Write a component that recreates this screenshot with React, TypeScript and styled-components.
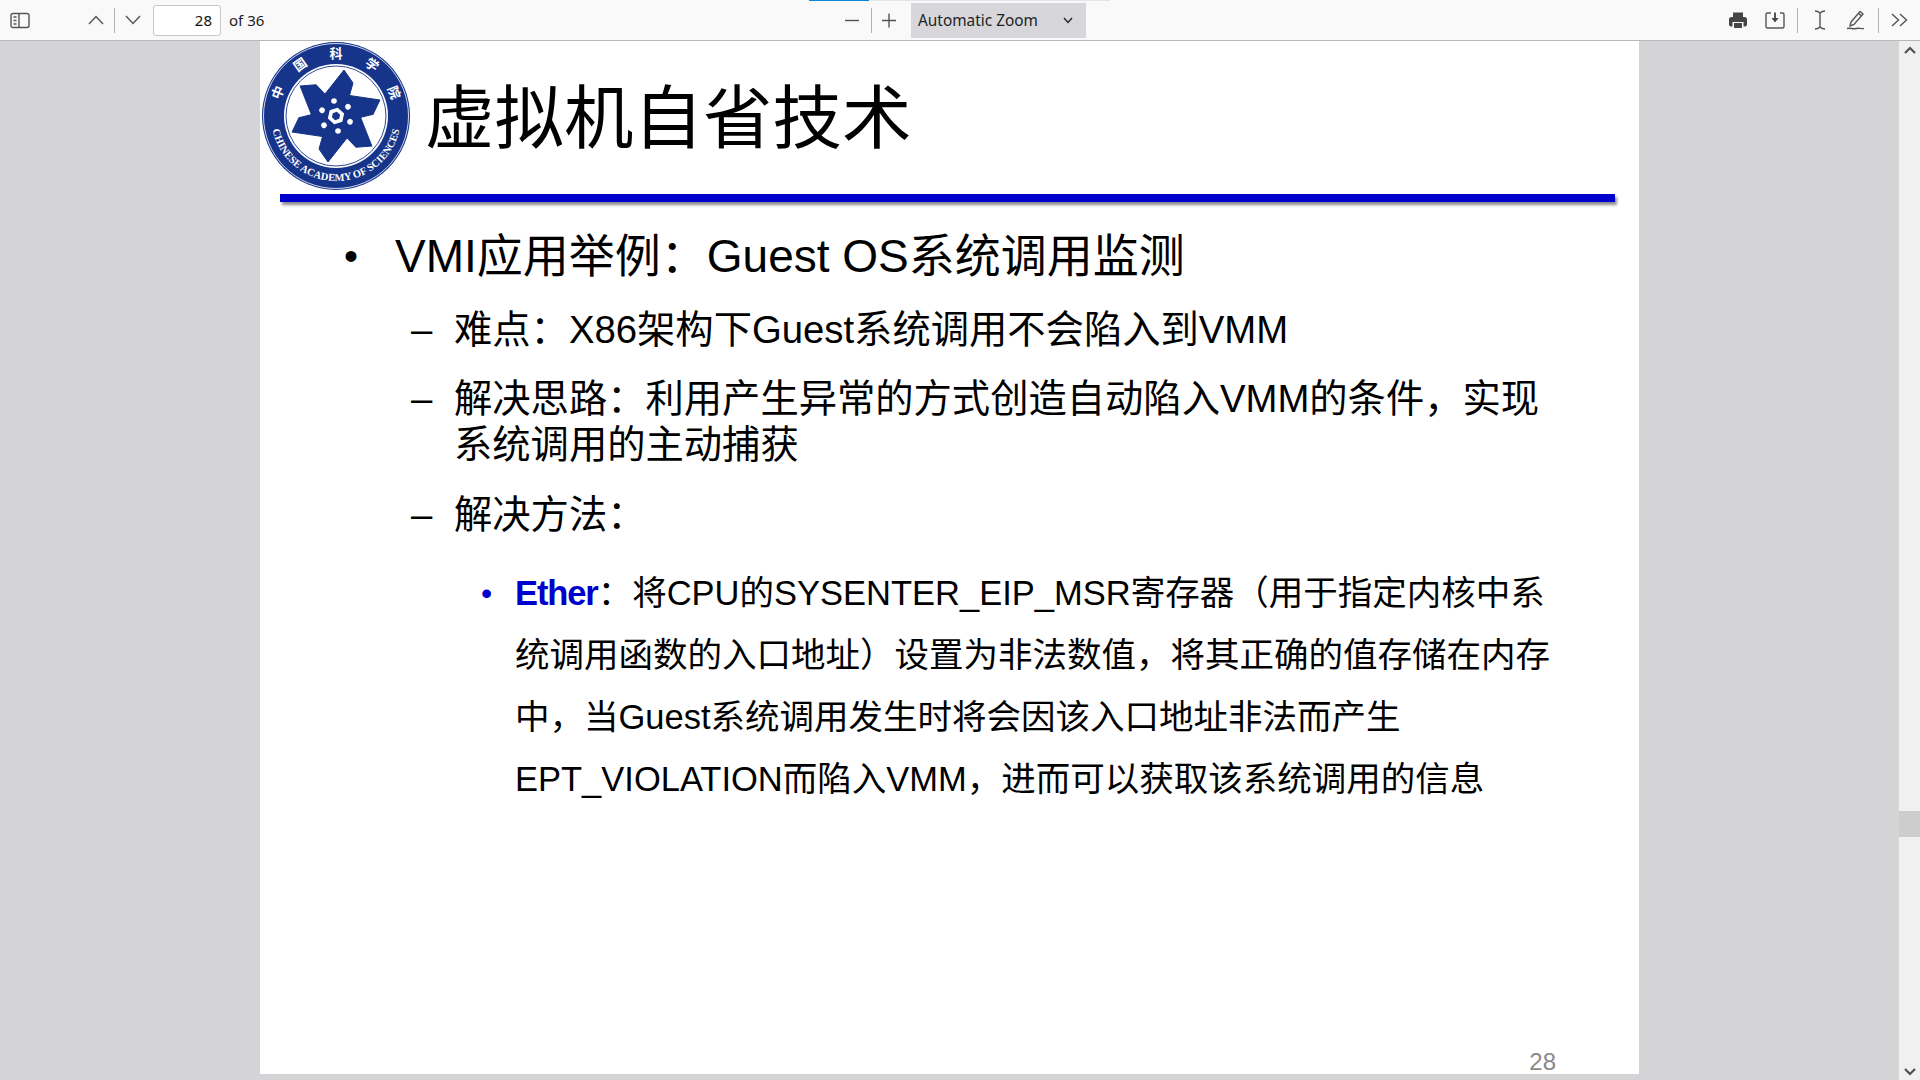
import React from 'react';
import styled, { createGlobalStyle } from 'styled-components';

const GlobalStyle = createGlobalStyle`
  html, body {
    margin: 0;
    padding: 0;
    height: 100%;
    overflow: hidden;
  }
  #root {
    height: 100%;
  }
`;

const CJK = `"Liberation Sans", "Noto Sans CJK SC", sans-serif`;

const PETAL = 'M-11 -22 L8 -46 L17 -33 L13 -19 Z';
const ANGLES = [0, 60, 120, 180, 240, 300];
const HEX_OUTER = '0,-8.500 7.400,-4.250 7.400,4.250 0,8.500 -7.400,4.250 -7.400,-4.250';
const HEX_INNER = '0,-4.300 3.700,-2.150 3.700,2.150 0,4.300 -3.700,2.150 -3.700,-2.150';
const SEAL = [
  { ch: '中', a: -68 },
  { ch: '国', a: -35 },
  { ch: '科', a: 0 },
  { ch: '学', a: 35 },
  { ch: '院', a: 68 },
];

const Logo = () => (
  <svg width="150" height="150" viewBox="0 0 150 150">
    <defs>
      <path id="bottomArc" d="M9 75 A 65 65 0 0 0 139 75" fill="none" />
    </defs>
    <circle cx="74" cy="75" r="74" fill="#16348a" />
    <circle cx="74" cy="75" r="72.500" fill="none" stroke="#fff" strokeWidth="0.800" />
    <circle cx="74" cy="75" r="52" fill="#fff" />
    <circle cx="74" cy="75" r="50" fill="none" stroke="#16348a" strokeWidth="0.900" />
    <g transform="translate(74 75)">
      {ANGLES.map((a) => (
        <path key={a} d={PETAL} fill="#16348a" stroke="#16348a" strokeLinejoin="round" transform={`rotate(${a})`} />
      ))}
      <circle r="24" fill="#16348a" />
      {ANGLES.map((a) => (
        <circle key={a} cx="-2" cy="-15" r="2.800" fill="#fff" transform={`rotate(${a})`} />
      ))}
      <polygon points={HEX_OUTER} fill="#fff" transform="rotate(12)" />
      <polygon points={HEX_INNER} fill="#16348a" transform="rotate(12)" />
    </g>
    <text fontFamily='"Liberation Serif", serif' fontSize="10.500" fontWeight="700" fill="#fff">
      <textPath href="#bottomArc" startOffset="50%" textAnchor="middle">CHINESE ACADEMY OF SCIENCES</textPath>
    </text>
    {SEAL.map((s) => (
      <text
        key={s.ch}
        x="74"
        y="17"
        textAnchor="middle"
        fontFamily='"Noto Sans CJK SC", serif'
        fontSize="13"
        fontWeight="700"
        fill="#fff"
        transform={`rotate(${s.a} 74 75)`}
      >
        {s.ch}
      </text>
    ))}
  </svg>
);

const icon = { fill: 'none', stroke: '#555', strokeWidth: 1.4 };

const App = () => (
  <Shell>
    <GlobalStyle />
    <Toolbar>
      <LoadBar>
        <LoadFill />
      </LoadBar>
      <SidebarToggle>
        <svg width="20" height="17" viewBox="0 0 20 17" {...icon}>
          <rect x="1" y="1.500" width="18" height="14" rx="2" />
          <path d="M9 1.500V15.500M3.500 5H6.500M3.500 8.500H6.500M3.500 12H6.500" />
        </svg>
      </SidebarToggle>
      <IconButton $width={36}>
        <svg width="16" height="10" viewBox="0 0 16 10" {...icon}><path d="M1 9L8 1.500L15 9" /></svg>
      </IconButton>
      <Divider />
      <IconButton $width={35}>
        <svg width="16" height="10" viewBox="0 0 16 10" {...icon}><path d="M1 1L8 8.500L15 1" /></svg>
      </IconButton>
      <PageInput>28</PageInput>
      <PageCount>of 36</PageCount>
      <ZoomGroup>
        <IconButton $width={38}>
          <svg width="16" height="16" viewBox="0 0 16 16" {...icon}><path d="M1 8.500H15" /></svg>
        </IconButton>
        <Divider />
        <IconButton $width={34}>
          <svg width="16" height="16" viewBox="0 0 16 16" {...icon}><path d="M1 8.500H15M8 1.500V15.500" /></svg>
        </IconButton>
        <ZoomSelect>
          Automatic Zoom
          <svg width="10" height="7" viewBox="0 0 10 7" fill="none" stroke="#222" strokeWidth="1.300"><path d="M1 1L5 5.500L9 1" /></svg>
        </ZoomSelect>
      </ZoomGroup>
      <RightTools>
        <IconButton $width={36}>
          <svg width="18" height="18" viewBox="0 0 18 18">
            <path fill="#444" d="M4 1.500h10v4.500H4zM2.500 6h13A2.500 2.500 0 0 1 18 8.500v5a2 2 0 0 1-2 2h-1.500V11h-11v4.500H2a2 2 0 0 1-2-2v-5A2.500 2.500 0 0 1 2.500 6zM5 12h8v5H5z" />
          </svg>
        </IconButton>
        <IconButton $width={41} $padRight={3}>
          <svg width="20" height="18" viewBox="0 0 20 18" {...icon}>
            <path d="M6 2H2.500A1.500 1.500 0 0 0 1 3.500V15.500A1.500 1.500 0 0 0 2.500 17H17.500A1.500 1.500 0 0 0 19 15.500V3.500A1.500 1.500 0 0 0 17.500 2H15" />
            <path d="M10 1.500V8" strokeWidth="2" />
            <path fill="#444" stroke="none" d="M6.500 7H13.500L10 11.500Z" />
          </svg>
        </IconButton>
        <Divider />
        <IconButton $width={44}>
          <svg width="12" height="20" viewBox="0 0 12 20" {...icon}><path d="M1 1C4 1 5 2 6 3C7 2 8 1 11 1M6 3V17M1 19C4 19 5 18 6 17C7 18 8 19 11 19" /></svg>
        </IconButton>
        <IconButton $width={36} $padRight={10}>
          <svg width="19" height="20" viewBox="0 0 19 20" {...icon}>
            <path d="M5 12L14 1.500L17 4L8 14.500L4 16Z M12.500 3.500L15.500 6" />
            <path d="M1 18.500C5 17.500 7 19.500 10 18.500C13 17.500 15 19 18 18.500" />
          </svg>
        </IconButton>
        <Divider />
        <IconButton $width={41}>
          <svg width="17" height="14" viewBox="0 0 17 14" {...icon}><path d="M1 1L7.500 7L1 13M9 1L15.500 7L9 13" /></svg>
        </IconButton>
      </RightTools>
    </Toolbar>
    <Viewer>
      <PageArea>
        <Slide>
          <SlideHeader>
            <Logo />
            <SlideTitle>虚拟机自省技术</SlideTitle>
          </SlideHeader>
          <TitleRule />
          <Level1>
            <Dot>•</Dot>
            <span>VMI应用举例&#xFF1A;Guest OS系统调用监测</span>
          </Level1>
          <Level2>
            <Dash>–</Dash>
            <span>难点&#xFF1A;X86架构下Guest系统调用不会陷入到VMM</span>
          </Level2>
          <Level2>
            <Dash>–</Dash>
            <span>
              解决思路&#xFF1A;利用产生异常的方式创造自动陷入VMM的条件&#xFF0C;实现
              <br />
              系统调用的主动捕获
            </span>
          </Level2>
          <Level2>
            <Dash>–</Dash>
            <span>解决方法&#xFF1A;</span>
          </Level2>
          <Level3>
            <BlueDot>•</BlueDot>
            <span>
              <Keyword>Ether</Keyword>&#xFF1A;将CPU的SYSENTER_EIP_MSR寄存器&#xFF08;用于指定内核中系
              <br />
              统调用函数的入口地址&#xFF09;设置为非法数值&#xFF0C;将其正确的值存储在内存
              <br />
              中&#xFF0C;当Guest系统调用发生时将会因该入口地址非法而产生
              <br />
              EPT_VIOLATION而陷入VMM&#xFF0C;进而可以获取该系统调用的信息
            </span>
          </Level3>
          <PageNumber>28</PageNumber>
        </Slide>
      </PageArea>
      <ScrollBar>
        <ScrollArrow>
          <svg width="12" height="8" viewBox="0 0 12 8" fill="none" stroke="#505050" strokeWidth="2.200"><path d="M1 7L6 2L11 7" /></svg>
        </ScrollArrow>
        <ScrollTrack>
          <ScrollThumb />
        </ScrollTrack>
        <ScrollArrow>
          <svg width="12" height="8" viewBox="0 0 12 8" fill="none" stroke="#505050" strokeWidth="2.200"><path d="M1 1L6 6L11 1" /></svg>
        </ScrollArrow>
      </ScrollBar>
    </Viewer>
  </Shell>
);

export default App;

const Shell = styled.div`
  display: flex;
  flex-direction: column;
  width: 1920px;
  height: 1080px;
  overflow: hidden;
  background: #d4d4d7;
  font-family: "Noto Sans", sans-serif;
`;

const Toolbar = styled.div`
  position: relative;
  display: flex;
  align-items: center;
  flex: 0 0 40px;
  padding-left: 10px;
  background: #f9f9fa;
  border-bottom: 1px solid #b8b8b8;
`;

const LoadBar = styled.div`
  position: absolute;
  top: 0;
  left: 809px;
  width: 301px;
  height: 1px;
  background: #e4e4e4;
`;

const LoadFill = styled.div`
  width: 60px;
  height: 1px;
  background: #0a84d6;
`;

const SidebarToggle = styled.div`
  display: flex;
  align-items: center;
  flex: 0 0 68px;
`;

const IconButton = styled.div<{ $width: number; $padRight?: number }>`
  display: flex;
  align-items: center;
  justify-content: center;
  box-sizing: border-box;
  flex: 0 0 ${(p) => p.$width}px;
  height: 30px;
  padding-right: ${(p) => p.$padRight ?? 0}px;
`;

const Divider = styled.div`
  flex: 0 0 1px;
  height: 25px;
  background: #b1b1b1;
`;

const PageInput = styled.div`
  box-sizing: border-box;
  flex: 0 0 68px;
  height: 31px;
  margin-left: 3px;
  padding-right: 8px;
  background: #fff;
  border: 1px solid #c8c8c8;
  border-radius: 3px;
  text-align: right;
  font-size: 15px;
  line-height: 28px;
  color: #111;
`;

const PageCount = styled.div`
  flex: 0 0 60px;
  margin-left: 8px;
  font-size: 15px;
  color: #222;
`;

const ZoomGroup = styled.div`
  display: flex;
  align-items: center;
  margin-left: 544px;
`;

const ZoomSelect = styled.div`
  display: flex;
  align-items: center;
  justify-content: space-between;
  box-sizing: border-box;
  flex: 0 0 175px;
  height: 35px;
  margin-left: 5px;
  padding: 0 13px 0 7px;
  background: #d6d6db;
  font-size: 15.400px;
  color: #222;
  white-space: nowrap;
`;

const RightTools = styled.div`
  display: flex;
  align-items: center;
  margin-left: auto;
`;

const Viewer = styled.div`
  display: flex;
  flex: 1;
  min-height: 0;
`;

const PageArea = styled.div`
  flex: 1;
  padding-left: 260px;
`;

const Slide = styled.div`
  display: flex;
  flex-direction: column;
  width: 1379px;
  height: 1033px;
  background: #fff;
  font-family: ${CJK};
  color: #000;
`;

const SlideHeader = styled.div`
  display: flex;
  align-items: center;
  box-sizing: border-box;
  height: 153px;
  padding: 0 0 3px 2px;
`;

const SlideTitle = styled.h1`
  margin: 8px 0 0 13px;
  font-size: 69.500px;
  font-weight: 400;
  line-height: 1;
`;

const TitleRule = styled.div`
  width: 1335px;
  height: 8px;
  margin-left: 20px;
  background: #0000cc;
  box-shadow: 2px 3px 3px rgba(0, 0, 0, 0.45);
`;

const Level1 = styled.div`
  display: flex;
  margin-top: 27px;
  padding-left: 84px;
  font-size: 46px;
  line-height: 54px;
  white-space: nowrap;
`;

const Dot = styled.span`
  flex: 0 0 51px;
  font-size: 40px;
`;

const Level2 = styled.div`
  display: flex;
  margin-top: 23.600px;
  padding-left: 151px;
  font-size: 38.300px;
  line-height: 46px;
  white-space: nowrap;
`;

const Dash = styled.span`
  flex: 0 0 43px;
`;

const Level3 = styled.div`
  display: flex;
  margin-top: 24.200px;
  padding-left: 221px;
  font-size: 34.500px;
  line-height: 62px;
  white-space: nowrap;
`;

const BlueDot = styled.span`
  flex: 0 0 34px;
  font-size: 32px;
  color: #0000cc;
`;

const Keyword = styled.span`
  color: #0000cc;
  font-weight: 700;
  letter-spacing: -1.100px;
`;

const PageNumber = styled.div`
  margin-top: auto;
  padding-right: 83px;
  text-align: right;
  font-size: 24px;
  line-height: 24px;
  color: #898989;
`;

const ScrollBar = styled.div`
  display: flex;
  flex-direction: column;
  flex: 0 0 21px;
  background: #f0f0f0;
`;

const ScrollArrow = styled.div`
  display: flex;
  align-items: center;
  justify-content: center;
  height: 17px;
`;

const ScrollTrack = styled.div`
  flex: 1;
  padding-top: 753px;
`;

const ScrollThumb = styled.div`
  height: 26px;
  background: #cdcdcd;
`;
